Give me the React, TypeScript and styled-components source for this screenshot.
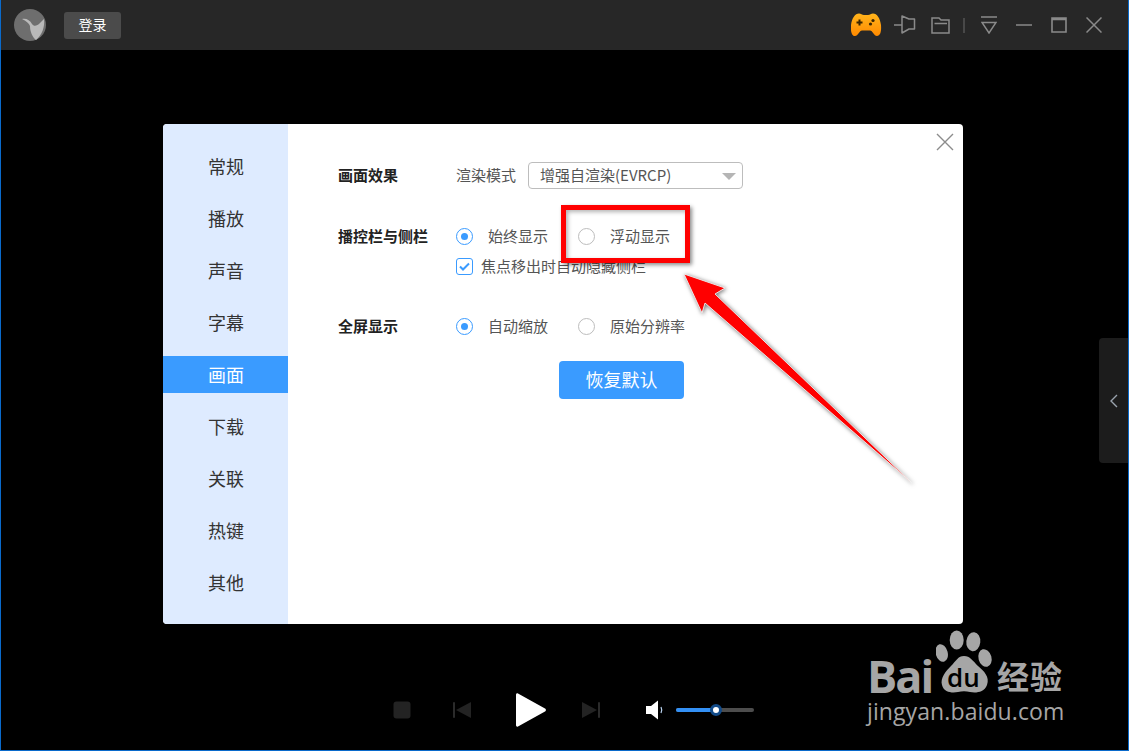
import React from "react";
import styled, { createGlobalStyle } from "styled-components";

const Global = createGlobalStyle`
  html, body { margin: 0; padding: 0; background: #000; }
  * { box-sizing: border-box; }
  #root { width: 1129px; height: 751px; overflow: hidden; }
`;

const FONT = `"Noto Sans CJK SC", "Liberation Sans", sans-serif`;

const Win = styled.div`
  position: relative;
  width: 1129px;
  height: 751px;
  display: flex;
  flex-direction: column;
  background: #000;
  border-left: 1px solid #0a6acb;
  border-right: 1px solid #0a6acb;
  border-bottom: 1px solid #0a6acb;
  font-family: ${FONT};
  overflow: hidden;
`;

const TitleBar = styled.header`
  height: 50px;
  flex: none;
  display: flex;
  align-items: center;
  padding: 0 26px 0 13px;
  background: #272727;
`;

const Avatar = styled.svg`
  width: 32px;
  height: 32px;
  flex: none;
`;

const LoginButton = styled.button`
  margin-left: 18px;
  width: 57px;
  height: 27px;
  padding: 0 0 2px;
  border: 0;
  border-radius: 3px;
  background: #4b4b4b;
  color: #fff;
  font: 14px ${FONT};
`;

const Spacer = styled.div`
  flex: 1;
`;

const BarIcon = styled.svg<{ $gap: number }>`
  flex: none;
  margin-left: ${(p) => p.$gap}px;
  fill: none;
  stroke: #8a8a8a;
  stroke-width: 1.5;
`;

const Stage = styled.main`
  flex: 1;
  display: flex;
  flex-direction: column;
  padding: 74px 0 0 162px;
`;

const Dialog = styled.section`
  position: relative;
  width: 800px;
  height: 500px;
  flex: none;
  display: flex;
  background: #fff;
  border-radius: 4px;
  overflow: hidden;
`;

const Sidebar = styled.nav`
  width: 125px;
  flex: none;
  display: flex;
  flex-direction: column;
  gap: 15px;
  padding-top: 24px;
  background: #deebff;
`;

const NavItem = styled.div<{ $active?: boolean }>`
  height: 37px;
  line-height: 36px;
  padding-left: 45px;
  font-size: 18px;
  color: ${(p) => (p.$active ? "#fff" : "#333")};
  background: ${(p) => (p.$active ? "#3a9bff" : "transparent")};
`;

const Content = styled.div`
  flex: 1;
  display: flex;
  flex-direction: column;
  padding: 38px 0 0 50px;
`;

const Row = styled.div<{ $top?: number }>`
  display: flex;
  align-items: center;
  height: 26px;
  margin-top: ${(p) => p.$top ?? 0}px;
`;

const RowLabel = styled.div`
  width: 118px;
  flex: none;
  padding-bottom: 2px;
  font-size: 15px;
  font-weight: 700;
  color: #222;
`;

const PlainText = styled.span`
  display: block;
  padding-bottom: 2px;
  font-size: 15px;
  color: #555;
  white-space: nowrap;
`;

const Select = styled.div`
  position: relative;
  margin-left: 12px;
  width: 215px;
  height: 27px;
  display: flex;
  align-items: center;
  padding: 0 0 2px 11px;
  border: 1px solid #bdbdbd;
  border-radius: 4px;
  font-size: 15px;
  color: #555;

  &::after {
    content: "";
    position: absolute;
    right: 6px;
    top: 10px;
    border-left: 7px solid transparent;
    border-right: 7px solid transparent;
    border-top: 7px solid #b5b5b5;
  }
`;

const Option = styled.label<{ $width: number }>`
  width: ${(p) => p.$width}px;
  flex: none;
  display: flex;
  align-items: center;
  gap: 15px;
`;

const Radio = styled.span<{ $on?: boolean }>`
  position: relative;
  width: 17px;
  height: 17px;
  flex: none;
  border-radius: 50%;
  border: 1px solid ${(p) => (p.$on ? "#3a9bff" : "#bdbdbd")};

  &::after {
    content: "";
    display: ${(p) => (p.$on ? "block" : "none")};
    position: absolute;
    left: 4px;
    top: 4px;
    width: 7px;
    height: 7px;
    border-radius: 50%;
    background: #3a9bff;
  }
`;

const CheckRow = styled.div`
  display: flex;
  align-items: center;
  gap: 8px;
  height: 20px;
  margin: 7px 0 0 118px;
`;

const CheckBox = styled.span`
  width: 17px;
  height: 17px;
  flex: none;
  display: flex;
  align-items: center;
  justify-content: center;
  border-radius: 3px;
  border: 1px solid #3a9bff;
`;

const PrimaryButton = styled.button`
  width: 125px;
  height: 38px;
  margin: 22px 0 0 221px;
  padding: 0 0 2px;
  border: 0;
  border-radius: 4px;
  background: #3a9bff;
  color: #fff;
  font: 18px ${FONT};
`;

const CloseIcon = styled.svg`
  position: absolute;
  top: 9px;
  right: 9px;
  stroke: #8c8c8c;
  stroke-width: 1.4;
  fill: none;
`;

const Controls = styled.div`
  margin: 68px 0 0 230px;
  height: 36px;
  display: flex;
  align-items: center;
`;

const CtrlIcon = styled.svg<{ $gap: number }>`
  flex: none;
  margin-left: ${(p) => p.$gap}px;
`;

const Track = styled.div`
  position: relative;
  width: 78px;
  height: 4px;
  margin-left: 12px;
  border-radius: 2px;
  background: #4d4d4d;
`;

const TrackFill = styled.div`
  height: 100%;
  border-radius: 2px;
  background: #3390f5;
`;

const Knob = styled.span`
  position: absolute;
  top: -4px;
  width: 12px;
  height: 12px;
  margin-left: -6px;
  border-radius: 50%;
  background: #fff;
  border: 3px solid #114a88;
`;

const SideTab = styled.div`
  position: absolute;
  top: 338px;
  right: 0;
  width: 29px;
  height: 125px;
  display: flex;
  align-items: center;
  padding-left: 11px;
  background: #1c1c1c;
  border-radius: 4px 0 0 4px;
`;

const Highlight = styled.div`
  position: absolute;
  left: 560px;
  top: 205px;
  width: 129px;
  height: 58px;
  border: 5px solid #ff0000;
  box-shadow: 2px 2px 4px rgba(0, 0, 0, 0.45), inset 2px 2px 4px rgba(0, 0, 0, 0.3);
  pointer-events: none;
`;

const Arrow = styled.svg`
  position: absolute;
  left: 669px;
  top: 265px;
  filter: drop-shadow(1px 1px 2px rgba(0, 0, 0, 0.55));
  pointer-events: none;
`;

const Watermark = styled.div`
  position: absolute;
  left: 866px;
  top: 630px;
  width: 210px;
  height: 100px;
  color: #a6a6a6;
`;

const WmBai = styled.span`
  position: absolute;
  left: 0;
  top: 26px;
  font: 700 45px/40px "Open Sans", sans-serif;
  letter-spacing: -2px;
`;

const WmDu = styled.span`
  position: absolute;
  left: 80px;
  top: 34px;
  font: 600 26px/26px "Open Sans", sans-serif;
  color: #000;
`;

const WmJing = styled.span`
  position: absolute;
  left: 130px;
  top: 25px;
  font: 700 32px/40px "Noto Sans CJK SC", sans-serif;
  letter-spacing: 1px;
  white-space: nowrap;
`;

const WmUrl = styled.span`
  position: absolute;
  left: 0;
  top: 67px;
  font: 23px/28px "Open Sans", sans-serif;
  letter-spacing: 0.1px;
  white-space: nowrap;
`;

const WmPaw = styled.svg`
  position: absolute;
  left: 69px;
  top: 0;
  fill: #a6a6a6;
`;

const navItems = ["常规", "播放", "声音", "字幕", "画面", "下载", "关联", "热键", "其他"];

export default function App() {
  return (
    <Win>
      <Global />
      <TitleBar>
        <Avatar viewBox="0 0 32 32">
          <circle cx="16" cy="16" r="16" fill="#6e6e6e" />
          <path d="M8 10C12 9 16 11 18 15C20 18 23 17 26 14L30 10C31 18 28 26 22 31C18 28 16 22 16 17C15 14 12 12 8 10Z" fill="#b9b9b9" />
        </Avatar>
        <LoginButton>登录</LoginButton>
        <Spacer />
        <svg width="31" height="24" viewBox="0 0 31 24" style={{ flex: "none" }}>
          <defs>
            <linearGradient id="pad" x1="0" y1="0" x2="0" y2="1">
              <stop offset="0" stopColor="#ffb41c" />
              <stop offset="1" stopColor="#ff8a00" />
            </linearGradient>
          </defs>
          <path d="M8 .5C10 .5 11 2 13 2H17C19 2 20 .5 22 .5C26 .5 29 5 30 12C30.500 18 29.500 23 26 23C23 23 21.500 17.500 19 17.500H11C8.500 17.500 7 23 4 23C.5 23-.5 18 0 12C1 5 4 .5 8 .5Z" fill="url(#pad)" />
          <path d="M8.500 6.500v6M5.500 9.500h6" stroke="#3a2500" strokeWidth="2" />
          <circle cx="22" cy="7.500" r="1.600" fill="#3a2500" />
          <circle cx="19.500" cy="11" r="1.600" fill="#3a2500" />
        </svg>
        <BarIcon $gap={12} width="22" height="20" viewBox="0 0 22 20">
          <path d="M0 10H8M8 1L15 4H20.500V14H15L8 18Z" strokeLinejoin="round" />
        </BarIcon>
        <BarIcon $gap={15} width="19" height="17" viewBox="0 0 19 17">
          <path d="M1 16V1H8L10 3H18V16ZM3.500 6.500H16" />
        </BarIcon>
        <BarIcon $gap={13} width="2" height="15" viewBox="0 0 2 15">
          <path d="M1 0v15" stroke="#555" />
        </BarIcon>
        <BarIcon $gap={16} width="16" height="18" viewBox="0 0 16 18">
          <path d="M0 1h16M1 6.500h14L8 17z" />
        </BarIcon>
        <BarIcon $gap={19} width="16" height="4" viewBox="0 0 16 4">
          <path d="M0 2h16" />
        </BarIcon>
        <BarIcon $gap={19} width="16" height="16" viewBox="0 0 16 16">
          <path d="M1 1h14v14H1zM1 2.500h14" strokeWidth="1.600" />
        </BarIcon>
        <BarIcon $gap={19} width="16" height="16" viewBox="0 0 16 16">
          <path d="M0.5 0.5l15 15M15.5 0.5l-15 15" />
        </BarIcon>
      </TitleBar>

      <Stage>
        <Dialog>
          <Sidebar>
            {navItems.map((n) => (
              <NavItem key={n} $active={n === "画面"}>
                {n}
              </NavItem>
            ))}
          </Sidebar>
          <Content>
            <Row>
              <RowLabel>画面效果</RowLabel>
              <PlainText>渲染模式</PlainText>
              <Select>增强自渲染(EVRCP)</Select>
            </Row>
            <Row $top={35}>
              <RowLabel>播控栏与侧栏</RowLabel>
              <Option $width={122}>
                <Radio $on />
                <PlainText>始终显示</PlainText>
              </Option>
              <Option $width={122}>
                <Radio />
                <PlainText>浮动显示</PlainText>
              </Option>
            </Row>
            <CheckRow>
              <CheckBox>
                <svg width="11" height="9" viewBox="0 0 11 9">
                  <path d="M1 4.500L4 7.500 10 1.500" fill="none" stroke="#3a9bff" strokeWidth="2" />
                </svg>
              </CheckBox>
              <PlainText>焦点移出时自动隐藏侧栏</PlainText>
            </CheckRow>
            <Row $top={37}>
              <RowLabel>全屏显示</RowLabel>
              <Option $width={122}>
                <Radio $on />
                <PlainText>自动缩放</PlainText>
              </Option>
              <Option $width={122}>
                <Radio />
                <PlainText>原始分辨率</PlainText>
              </Option>
            </Row>
            <PrimaryButton>恢复默认</PrimaryButton>
          </Content>
          <CloseIcon width="18" height="18" viewBox="0 0 18 18">
            <path d="M1 1l16 16M17 1L1 17" />
          </CloseIcon>
        </Dialog>

        <Controls>
          <CtrlIcon $gap={0} width="18" height="18" viewBox="0 0 18 18">
            <rect x="0.5" y="0.5" width="17" height="17" rx="3" fill="#232323" />
          </CtrlIcon>
          <CtrlIcon $gap={42} width="20" height="18" viewBox="0 0 20 18">
            <rect x="0" y="1" width="2" height="16" rx="1" fill="#2b2b2b" />
            <path d="M3 9L18 1v16z" fill="#232323" />
          </CtrlIcon>
          <CtrlIcon $gap={42} width="32" height="36" viewBox="0 0 32 36">
            <path d="M3 1.500L30 16.500a1.700 1.700 0 0 1 0 3L3 34.500c-1 .5-2 0-2-1.500V3c0-1.500 1-2 2-1.500z" fill="#fff" />
          </CtrlIcon>
          <CtrlIcon $gap={33} width="20" height="18" viewBox="0 0 20 18">
            <path d="M2 1l15 8-15 8z" fill="#232323" />
            <rect x="18" y="1" width="2" height="16" rx="1" fill="#2b2b2b" />
          </CtrlIcon>
          <CtrlIcon $gap={46} width="18" height="20" viewBox="0 0 18 20">
            <path d="M0 6h5l7-5.500v19l-7-5.500H0z" fill="#fff" />
            <path d="M15 7c1 2 1 4 0 6" fill="none" stroke="#bcd7f5" strokeWidth="1.200" />
          </CtrlIcon>
          <Track>
            <TrackFill style={{ width: "51%" }} />
            <Knob style={{ left: "51%" }} />
          </Track>
        </Controls>
      </Stage>

      <SideTab>
        <svg width="8" height="14" viewBox="0 0 8 14">
          <path d="M7 1L1 7l6 6" fill="none" stroke="#9aa3ad" strokeWidth="1.400" />
        </svg>
      </SideTab>

      <Highlight />

      <Arrow width="250" height="225" viewBox="670 265 250 225">
        <path
          d="M684 274L725 288 715 294 912 483 705 303 702 313z"
          fill="#ff0000"
          stroke="#f0f0f0"
          strokeWidth="0.900"
          strokeLinejoin="round"
        />
      </Arrow>

      <Watermark>
        <WmPaw width="60" height="66" viewBox="0 0 60 66">
          <ellipse cx="20.700" cy="10" rx="7" ry="9.500" />
          <ellipse cx="37.300" cy="11.700" rx="7" ry="9.500" transform="rotate(6 37.300 11.700)" />
          <ellipse cx="5.700" cy="23" rx="6" ry="9" transform="rotate(-15 5.700 23)" />
          <ellipse cx="49" cy="28" rx="6.500" ry="9" transform="rotate(-15 49 28)" />
          <path d="M28 26C34 26 37 31 42 36C48 41 54 47 51 55C48 63 39 63 34 62C30 61 26 61 22 62C17 63 8 63 6 55C4 48 10 41 15 36C20 31 22 26 28 26Z" />
        </WmPaw>
        <WmBai>Bai</WmBai>
        <WmDu>du</WmDu>
        <WmJing>经验</WmJing>
        <WmUrl>jingyan.baidu.com</WmUrl>
      </Watermark>
    </Win>
  );
}
